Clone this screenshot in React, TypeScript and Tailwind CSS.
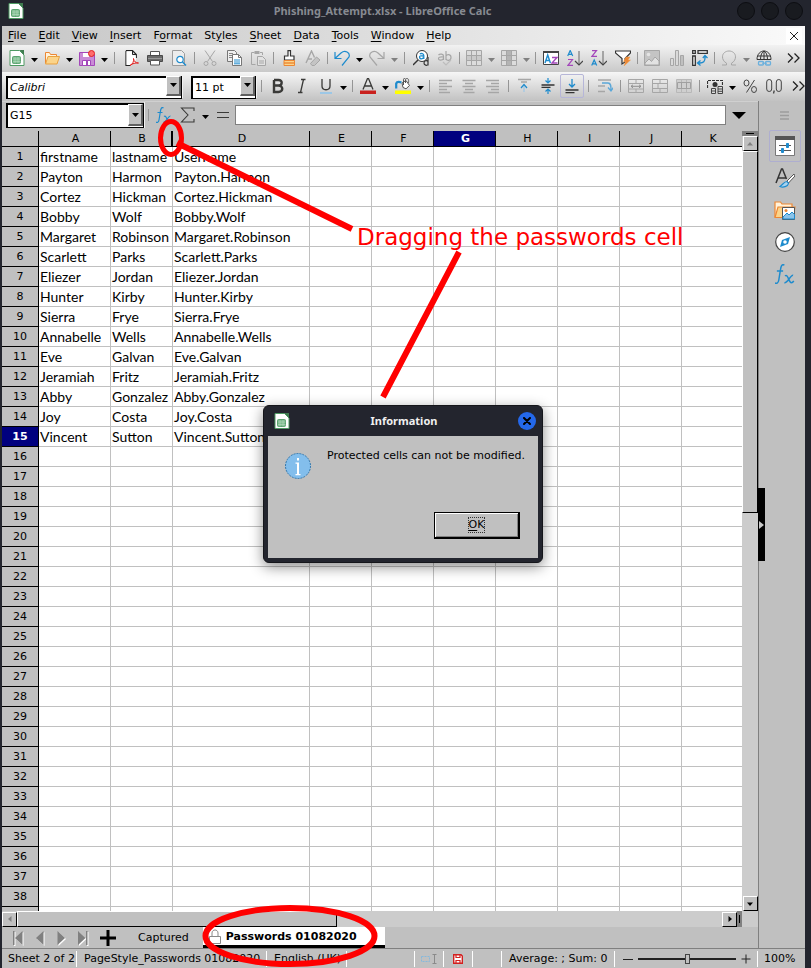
import type { ReactNode } from "react";

const ui = "font-['DejaVu_Sans','Liberation_Sans',sans-serif]";

/* ---------- icons ---------- */

function Icon({ children, size = "h-4 w-4" }: { children: ReactNode; size?: string }) {
  return (
    <svg viewBox="0 0 16 16" className={`${size} shrink-0`} fill="none" strokeWidth="1" aria-hidden="true">
      {children}
    </svg>
  );
}

const DARK = "#3a3a38";
const BLUE = "#1e8bcd";
const OFF = "#a6a6a6";
const PURPLE = "#a347ba";
const ORANGE = "#ed8733";

const CalcDoc = () => (
  <>
    <path d="M1 .5h9.5L15 5v10.500H1z" fill="#fff" stroke="#4e9a63" />
    <path d="M10.500 0H15v5z" fill="#3f7d50" />
    <rect x="3.500" y="6.500" width="8" height="7" rx="1" fill="#7dbb8e" stroke="#5aa36f" />
    <path d="M6 7v6.500M9 7v6.500M4 9h7.500M4 11.500h7.500" stroke="#b5dcc0" strokeWidth=".6" />
  </>
);

const icons: Record<string, ReactNode> = {
  new: <CalcDoc />,
  open: (
    <>
      <path d="M1.500 13V2.500h4l1 2h6V7" fill="#fff3dc" stroke={ORANGE} />
      <path d="M1.500 14l2.500-7.500h11.500L13 14z" fill="#fbd48a" stroke="#e9a13f" />
    </>
  ),
  save: (
    <>
      <path d="M.500 2.500h13l2 2v11H.500z" fill="#c98bd6" stroke={PURPLE} />
      <path d="M4 3h6v4H4z" fill="#fff" />
      <path d="M3.500 10.500h8v5h-8z" fill="#fff" stroke={PURPLE} />
      <path d="M8 11v4" stroke={PURPLE} strokeWidth="2" />
      <circle cx="12.500" cy="3.500" r="3" fill="#ff6d6d" stroke="#e02020" />
    </>
  ),
  pdf: (
    <>
      <path d="M3 .7h6.500l3.800 3.800V8M3 .7v14.600h4" fill="none" stroke="#222" strokeWidth="1.200" />
      <path d="M3.500 1.200h5.500v4h3.800v5L8 15H3.500z" fill="#fff" />
      <path d="M9.500.7v3.800h3.800" stroke="#222" />
      <path d="M7 15.500c3-1.500 4-4.500 3.500-7 .5 3 2 4.500 5 4.500-3-.3-6 .5-8.500 2.500z" stroke="#e02020" fill="#fff" />
    </>
  ),
  print: (
    <>
      <path d="M3.500 5V1.500h9V5" fill="#fff" stroke="#555" />
      <path d="M.5 5.500h15v6H.5z" fill="#6b6b6b" stroke="#4a4a4a" />
      <path d="M1 8.500h14" stroke="#999" />
      <path d="M3.500 10.500h9v4.500h-9z" fill="#fff" stroke="#555" />
    </>
  ),
  preview: (
    <>
      <path d="M1.500.5h9l3 3v12h-12z" fill="#ececec" stroke="#9c9c9c" />
      <circle cx="9" cy="9.500" r="3.200" fill="#fff" stroke={BLUE} strokeWidth="1.200" />
      <path d="M11.500 12l3.500 3.500" stroke={BLUE} strokeWidth="1.400" />
    </>
  ),
  cut: (
    <>
      <path d="M3 .5l7.500 11M13 .5l-7.500 11" stroke={OFF} />
      <circle cx="4" cy="13.500" r="2" stroke={OFF} />
      <circle cx="12" cy="13.500" r="2" stroke={OFF} />
    </>
  ),
  copy: (
    <>
      <path d="M1.500.5h7l2 2v9h-9z" fill="#efefef" stroke="#777" />
      <path d="M3 3.500h4M3 5.500h3M3 7.500h3" stroke="#888" />
      <path d="M6.500 4.500h6l3 3v8h-9z" fill="#fff" stroke="#777" />
      <path d="M8 10h6M8 12h6M8 13.800h6" stroke={BLUE} />
      <path d="M12.500 4.500v3h3" stroke="#777" />
    </>
  ),
  paste: (
    <>
      <path d="M5.500 14.500h-4v-12h3M10 2.500h2.500V5" stroke={OFF} />
      <path d="M4.500 1h5v3h-5z" fill={OFF} />
      <path d="M7.500 6.500h5l3 3v6h-8z" fill="#e2e2e2" stroke={OFF} />
      <path d="M9 11h5M9 13h5" stroke={OFF} />
    </>
  ),
  brush: (
    <>
      <path d="M7 .7h2.500V6h3.500v4H3.500V6H7z" fill="#fff" stroke="#333" strokeWidth="1.200" />
      <path d="M3 10.500h10.500v5H3z" fill="#fbd48a" stroke={ORANGE} />
      <path d="M3 13h10" stroke={ORANGE} strokeWidth="1.400" />
    </>
  ),
  clear: (
    <>
      <path d="M1 13L6.500 1l3 6.500M3 9h4" stroke={OFF} strokeWidth="1.400" />
      <path d="M5.500 13.500l6-6.500L15 10l-5.500 5.500H7z" fill="#c4c4c4" stroke={OFF} />
    </>
  ),
  undo: <path d="M1 2v6.500h6.500M1.500 8L7 3c4-3.500 9.500-.5 8 4l-7 8.500" stroke={BLUE} strokeWidth="1.200" />,
  redo: <path d="M15 2v6.500H8.500M14.500 8L9 3C5-.5-.5 2.500 1 7l7 8.500" stroke={OFF} strokeWidth="1.200" />,
  find: (
    <>
      <circle cx="9" cy="6" r="5.500" fill="#fff" stroke="#333" />
      <path d="M5 10l-5 5" stroke="#333" strokeWidth="1.500" />
      <path d="M6.800 4c1.500-1 4-.5 4 1.500V9M10.800 6c-4-.5-4.500 0-4.200 1.500.4 2 3 1.500 4.200 0" stroke={BLUE} strokeWidth="1.300" />
      <path d="M15 7v8.500M15 11.500c-1-1.500-4-1-4 1.500s3 2.800 4 1.500" stroke="#333" strokeWidth="1.200" />
    </>
  ),
  spell: (
    <>
      <path d="M1.500 5c1.500-1.500 5-1 5 1v4M6.500 7c-4-.5-5 .5-5 1.500 0 2.500 4 2 5 0M9 1v9M9 6c1-2 5-2 5 1.500s-4 3.500-5 1.500" stroke={OFF} strokeWidth="1.200" />
      <path d="M6 12l3 3 5-5" stroke="#bdbdbd" strokeWidth="1.200" />
    </>
  ),
  rows: (
    <>
      <path d="M.5.5h15v15H.5z" fill="#dcdcdc" stroke={OFF} />
      <path d="M1 6h14v4H1z" fill="#cacaca" />
      <path d="M.5 5.500h15M.5 10.500h15M5.500.5v15M10.500.5v15" stroke={OFF} />
    </>
  ),
  cols: (
    <>
      <path d="M.5.5h15v15H.5z" fill="#dcdcdc" stroke={OFF} />
      <path d="M6 1h5v14H6z" fill="#b4b4b4" />
      <path d="M.5 5.500h15M.5 10.500h15M5.500.5v15M10.500.5v15" stroke={OFF} />
    </>
  ),
  sort: (
    <>
      <path d="M.5 1.500h15v13H.5z" fill="#fff" stroke="#444" />
      <path d="M0 1h16v2H0z" fill="#444" />
      <path d="M2 13l2.700-8 2.700 8M3 10.500h3.500" stroke={BLUE} strokeWidth="1.400" />
      <path d="M9 7.500h5L9 13h5.500" stroke={PURPLE} strokeWidth="1.400" />
    </>
  ),
  asc: (
    <>
      <path d="M.7 6L3.200.5 5.700 6M1.500 4.300h3.400" stroke={BLUE} strokeWidth="1.200" />
      <path d="M1 9.500h4.500L1 15.300h5" stroke={PURPLE} strokeWidth="1.200" />
      <path d="M12 1v13" stroke="#8f8f8f" strokeWidth="1.500" />
      <path d="M8 11l4 4 4-4" stroke="#444" strokeWidth="1.200" />
    </>
  ),
  desc: (
    <>
      <path d="M1 .7h4.500L1 6.300h5" stroke={PURPLE} strokeWidth="1.200" />
      <path d="M.7 15.500L3.200 10l2.500 5.500M1.500 13.800h3.400" stroke={BLUE} strokeWidth="1.200" />
      <path d="M12 1v13" stroke="#8f8f8f" strokeWidth="1.500" />
      <path d="M8 11l4 4 4-4" stroke="#444" strokeWidth="1.200" />
    </>
  ),
  filter: (
    <>
      <path d="M.5 1h15v2L10 8.500V12l-3 2V8.500L.5 3z" fill="#fff" stroke="#333" strokeWidth="1.200" />
      <path d="M11 7h4l-2 3h2.500L9 16l1.500-4.500H8.500z" fill={ORANGE} stroke="#f0a050" strokeWidth=".5" />
    </>
  ),
  image: (
    <>
      <path d="M.5.5h15v15H.5z" fill="#c4c4c4" stroke={OFF} />
      <circle cx="4.500" cy="4.500" r="1.800" fill="#e4e4e4" />
      <path d="M1 13l4-4 2.500 2.500L11 7l4 4v4H1z" fill="#e2e2e2" stroke={OFF} />
    </>
  ),
  chart: (
    <>
      <path d="M2.500 8.500h3v7h-3z" fill="#dadada" stroke={OFF} />
      <path d="M7.500.5h3v15h-3z" fill="#dadada" stroke={OFF} />
      <path d="M12.500 5.500h3v10h-3z" fill="#c0c0c0" stroke={OFF} />
    </>
  ),
  pivot: (
    <>
      <path d="M.7.7h2.600v2.600H.7zM.7 6v9.300h2.600V6zM6 .7h9.300v2.600H6z" fill="#fff" stroke="#333" strokeWidth="1.300" />
      <path d="M13 6v2c0 3-2 5-5 5H6M10.800 8L13 5.500 15.500 8M8.500 10.500L5.500 13l3 2.500" stroke={BLUE} strokeWidth="1.300" />
    </>
  ),
  omega: <path d="M1 15h4.500v-1.800C2.500 11.500 1.500 9 1.500 6.800 1.500 3.300 4.500 1 8 1s6.500 2.300 6.500 5.800c0 2.200-1 4.700-4 6.400V15H15" stroke={OFF} />,
  link: (
    <>
      <path d="M1 9.500C1 4 4.500 1 8 1s7 3 7 8.500zM8 1v8.500M4.500 9.500C4.500 5 6 2 8 1c2 1 3.500 4 3.500 8.500M1.500 6h13" stroke="#333" />
      <rect x="2.500" y="11.500" width="5" height="3.500" rx="1" stroke="#6bb0dd" strokeWidth="1.300" />
      <rect x="9.500" y="11.500" width="5" height="3.500" rx="1" stroke="#6bb0dd" strokeWidth="1.300" />
      <path d="M6 13.200h5" stroke="#6bb0dd" />
    </>
  ),
  bold: (
    <path d="M4 2h4.500c4.500 0 4 5.500 0 5.500H4m4.500 0c5 0 5 6.500 0 6.500H4V2" stroke={DARK} strokeWidth="2.400" />
  ),
  italic: <path d="M7 1.500h4.500M4 14.500h4.500M9.500 1.500l-3 13" stroke={DARK} strokeWidth="1.300" />,
  underline: (
    <>
      <path d="M4 1v7c0 5 8 5 8 0V1" stroke={DARK} strokeWidth="1.300" />
      <path d="M2 15h12" stroke="#9cc7e6" strokeWidth="2" />
    </>
  ),
  fontcolor: (
    <>
      <path d="M3 11.500L7.500.5h1l4.500 11M4.700 8h6.600" stroke={DARK} strokeWidth="1.300" />
      <path d="M0 12.500h16V16H0z" fill="#c9211e" />
    </>
  ),
  highlight: (
    <>
      <path d="M1.200 10.500V5.500C2 3.500 4.500 3.800 6.500 4.500" stroke={BLUE} strokeWidth="2.200" />
      <path d="M7 5l4-2.500 3.500 5L11 10.800 8 9.500z" fill="#fff" stroke="#555" />
      <path d="M8.500 7V1.500c0-1.500 2-1.500 2 0V5M11 .8c2-1 3 .5 2.500 4" stroke="#555" />
      <path d="M0 12.500h16V16H0z" fill="#ffff00" />
    </>
  ),
  left: <path d="M2 2.500h13M2 5.500h8M2 8.500h13M2 11.500h8M2 14.500h11" stroke={OFF} strokeWidth="1.400" />,
  center: <path d="M1.500 2.500h13M4 5.500h8M1.500 8.500h13M4 11.500h8M2.500 14.500h11" stroke={OFF} strokeWidth="1.400" />,
  right: <path d="M1 2.500h13M6 5.500h8M1 8.500h13M6 11.500h8M3 14.500h11" stroke={OFF} strokeWidth="1.400" />,
  top: (
    <>
      <path d="M2 1.500h13M5 4h6" stroke={OFF} strokeWidth="1.500" />
      <path d="M8 14V8" stroke="#9cc7e6" strokeWidth="1.200" />
      <path d="M5 10l3-3.500L11 10" stroke={BLUE} strokeWidth="1.200" />
    </>
  ),
  middle: (
    <>
      <path d="M1.500 7h13M1.500 9.300h9" stroke="#333" strokeWidth="1.300" />
      <path d="M8 0v4.500M5.500 2.500L8 5l2.500-2.500M8 16v-4M5.500 13.500L8 11l2.500 2.500" stroke={BLUE} strokeWidth="1.200" />
    </>
  ),
  bottom: (
    <>
      <path d="M8 1v7.500M5 6l3 3 3-3" stroke={BLUE} strokeWidth="1.300" />
      <path d="M1.500 12h13M1.500 14.700h9" stroke="#333" strokeWidth="1.300" />
    </>
  ),
  wrap: (
    <>
      <path d="M1 2h13M1 8h7M1 13.500h7" stroke={OFF} strokeWidth="1.500" />
      <path d="M5 5h6c3 0 3 3 3 7M11 9.500l3 3.500 2.500-3.500" stroke="#5aa7d8" strokeWidth="1.300" />
    </>
  ),
  merge: (
    <>
      <path d="M.5 1.500h15v13H.5zM.5 5.500h15M.5 11h15M8 1.500v4M8 11v3.500" stroke={OFF} />
      <path d="M3 8.300h10M5 6.800L3 8.300l2 1.500M11 6.800l2 1.500-2 1.500" stroke="#8f8f8f" />
    </>
  ),
  split: <path d="M.5 1.500h15v13H.5zM.5 5.500h15M.5 10.500h15M8 1.500v4M6 5.500v5M8 10.500v4" stroke={OFF} />,
  center2: (
    <>
      <path d="M.5 1.500h15v13H.5z" fill="#cfcfcf" stroke="#b8b8b8" />
      <path d="M.5 10.500h15M5.500 1.500v3M10.500 1.500v3M5.500 10.500v4M10.500 10.500v4" stroke="#b8b8b8" />
      <path d="M1.500 4.500h13v6h-13zM5.500 4.500v6M10.500 4.500v6" stroke="#a0a0a0" />
    </>
  ),
  money: (
    <>
      <path d="M.5 10V2.500h15V7" stroke="#333" strokeWidth="1.200" strokeDasharray="3 1" />
      <circle cx="8" cy="6.500" r="2.500" fill="#333" />
      <path d="M4.500 10.500h4v5h-4zM11 8.500h4.500v7H11zM4.500 13h4M11 11h4.500M11 13.300h4.500" fill="#ddd" stroke="#444" />
    </>
  ),
  percent: (
    <>
      <path d="M12.500 2l-8 12.500" stroke="#444" />
      <ellipse cx="4.500" cy="5" rx="2.500" ry="3" stroke="#444" />
      <ellipse cx="12" cy="11.500" rx="2.500" ry="3" stroke="#444" />
    </>
  ),
  decimal: (
    <>
      <rect x=".7" y="1.500" width="5" height="12" rx="2.500" stroke="#444" />
      <rect x="10.300" y="1.500" width="5" height="12" rx="2.500" stroke="#444" />
      <path d="M8.300 12.500L7.500 15.500" stroke="#444" strokeWidth="1.300" />
    </>
  ),
  more: <path d="M3 3.500l4.500 4.500L3 12.500M9.500 3.500L14 8l-4.500 4.500" stroke="#222" strokeWidth="1.300" />,
  fx: (
    <path d="M7.500 1C5.500-.5 4.700 2 4.300 5L3 13c-.4 2.500-2 3-3 2M1.500 5.500h5M8 9.500c2.500-2 3 5.500 5 5.500 1 0 1.500-.5 2-1.500M14.500 9c-2-.5-4.500 6.500-7 6" stroke={BLUE} strokeWidth="1.200" />
  ),
  sigma: <path d="M14 4V1H1.500L8 8l-6.500 7H14v-3" stroke={DARK} strokeWidth="1.100" />,
  equals: <path d="M2 5.500h12M2 10.500h12" stroke={DARK} strokeWidth="1" />,
};

/* ---------- toolbar parts ---------- */

function Tool({ name, label, active = false }: { name: string; label: string; active?: boolean }) {
  return (
    <button
      type="button"
      aria-label={label}
      className={`flex h-6 w-6 shrink-0 items-center justify-center rounded-xs border ${active ? "border-[#b6b6d8]" : "border-transparent"}`}
    >
      <Icon>{icons[name]}</Icon>
    </button>
  );
}

function Drop({ label, off = false }: { label: string; off?: boolean }) {
  return (
    <button type="button" aria-label={label} className="flex h-6 w-[11px] shrink-0 items-center justify-center pt-1">
      <svg viewBox="0 0 7 4" className={`h-1 w-[7px] ${off ? "fill-[#808080]" : "fill-black"}`} aria-hidden="true">
        <path d="M0 0h7L3.500 4z" />
      </svg>
    </button>
  );
}

function Sep({ size = "w-[7px]" }: { size?: string }) {
  return (
    <span className={`flex ${size} shrink-0 justify-center`}>
      <span className="h-3 w-px bg-[#959595]" />
    </span>
  );
}

function Combo({ label, value, width, height, italic = false }: { label: string; value: string; width: string; height: string; italic?: boolean }) {
  return (
    <div className={`relative ${width} ${height} shrink-0 border-r border-b border-[#f2f2f2]`}>
      <select
        aria-label={label}
        defaultValue={value}
        className={`h-full w-full appearance-none border border-t-2 border-l-2 border-black bg-white pl-[2px] text-[11px] leading-4 text-black outline-none ${italic ? "italic" : ""}`}
      >
        <option>{value}</option>
      </select>
      <span className="pointer-events-none absolute top-[2px] right-px bottom-px flex w-[15px] items-center justify-center border-t border-l border-r-2 border-b-2 border-t-white border-l-white border-r-[#606060] border-b-[#606060] bg-[#c0c0c0]">
        <svg viewBox="0 0 7 4" className="h-1 w-[7px]" aria-hidden="true">
          <path d="M0 0h7L3.500 4z" />
        </svg>
      </span>
    </div>
  );
}

function Accel({ text, at = 0 }: { text: string; at?: number }) {
  return (
    <>
      {text.slice(0, at)}
      <span className="underline underline-offset-2">{text[at]}</span>
      {text.slice(at + 1)}
    </>
  );
}

/* ---------- data ---------- */

const menus: [string, number][] = [
  ["File", 0],
  ["Edit", 0],
  ["View", 0],
  ["Insert", 0],
  ["Format", 1],
  ["Styles", 2],
  ["Sheet", 0],
  ["Data", 0],
  ["Tools", 0],
  ["Window", 0],
  ["Help", 0],
];

const people = [
  ["firstname", "lastname", "Username"],
  ["Payton", "Harmon", "Payton.Harmon"],
  ["Cortez", "Hickman", "Cortez.Hickman"],
  ["Bobby", "Wolf", "Bobby.Wolf"],
  ["Margaret", "Robinson", "Margaret.Robinson"],
  ["Scarlett", "Parks", "Scarlett.Parks"],
  ["Eliezer", "Jordan", "Eliezer.Jordan"],
  ["Hunter", "Kirby", "Hunter.Kirby"],
  ["Sierra", "Frye", "Sierra.Frye"],
  ["Annabelle", "Wells", "Annabelle.Wells"],
  ["Eve", "Galvan", "Eve.Galvan"],
  ["Jeramiah", "Fritz", "Jeramiah.Fritz"],
  ["Abby", "Gonzalez", "Abby.Gonzalez"],
  ["Joy", "Costa", "Joy.Costa"],
  ["Vincent", "Sutton", "Vincent.Sutton"],
];

const columns = ["A", "B", "D", "E", "F", "G", "H", "I", "J", "K"];
const ROWS = 38;

/* ---------- page parts ---------- */

function TitleBar() {
  return (
    <header className="flex h-[26px] items-center px-2 pb-1">
      <span className="flex w-5">
        <Icon>
          <CalcDoc />
        </Icon>
      </span>
      <h1 className="flex-1 text-center font-['Noto_Sans',sans-serif] text-[11px] leading-5 font-bold text-[#878a91]">
        Phishing_Attempt.xlsx - LibreOffice Calc
      </h1>
      <div className="flex gap-[6px]">
        {["Minimise", "Maximise", "Close"].map((n) => (
          <button key={n} type="button" aria-label={n} className="h-[18px] w-[18px] rounded-full border border-[#0d0e12] bg-[#191b20]" />
        ))}
      </div>
    </header>
  );
}

function MenuBar() {
  return (
    <nav className="flex h-[19px] items-center bg-linear-to-r from-[#c6c6c6] to-[#fafafa] pr-[3px] pl-[6px]">
      <div className="flex flex-1 gap-3">
        {menus.map(([m, at]) => (
          <button key={m} type="button" className="text-[11px] leading-4 text-black">
            <Accel text={m} at={at} />
          </button>
        ))}
      </div>
      <button type="button" aria-label="Close document" className="flex h-4 w-4 items-center justify-center bg-white">
        <svg viewBox="0 0 8 8" className="h-2 w-2" stroke="#222" aria-hidden="true">
          <path d="M0 0l8 8M8 0L0 8" />
        </svg>
      </button>
    </nav>
  );
}

function StandardBar() {
  return (
    <div className="flex h-[27px] items-center overflow-hidden bg-linear-to-b from-[#f2f2f2] to-[#c9c9c9] pb-px pl-[3px]">
      <Tool name="new" label="New" />
      <Drop label="New options" />
      <Tool name="open" label="Open" />
      <Drop label="Open options" />
      <Tool name="save" label="Save" />
      <Drop label="Save options" />
      <Sep size="w-[9px]" />
      <Tool name="pdf" label="Export as PDF" />
      <Tool name="print" label="Print" />
      <Tool name="preview" label="Print preview" />
      <Sep />
      <Tool name="cut" label="Cut" />
      <Tool name="copy" label="Copy" />
      <Tool name="paste" label="Paste" />
      <Sep />
      <Tool name="brush" label="Clone formatting" />
      <Tool name="clear" label="Clear formatting" />
      <Sep size="w-[5px]" />
      <Tool name="undo" label="Undo" />
      <Drop label="Undo history" />
      <Tool name="redo" label="Redo" />
      <Drop label="Redo history" off />
      <Sep size="w-[9px]" />
      <Tool name="find" label="Find and replace" />
      <Tool name="spell" label="Spelling" />
      <Sep size="w-[5px]" />
      <Tool name="rows" label="Row" />
      <Drop label="Row options" off />
      <Tool name="cols" label="Column" />
      <Drop label="Column options" off />
      <Sep />
      <Tool name="sort" label="Sort" />
      <Tool name="asc" label="Sort ascending" />
      <Tool name="desc" label="Sort descending" />
      <Tool name="filter" label="AutoFilter" />
      <Sep size="w-[5px]" />
      <Tool name="image" label="Insert image" />
      <Tool name="chart" label="Insert chart" />
      <Tool name="pivot" label="Pivot table" />
      <Sep size="w-[5px]" />
      <Tool name="omega" label="Special character" />
      <Drop label="More characters" off />
      <Tool name="link" label="Hyperlink" />
      <span className="ml-auto">
        <Tool name="more" label="More tools" />
      </span>
    </div>
  );
}

function FormatBar() {
  return (
    <div className="flex h-[29px] items-center overflow-hidden bg-linear-to-b from-[#f6f6f6] to-[#c2c2c2] pb-[2px] pl-1">
      <Combo label="Font name" value="Calibri" width="w-[177px]" height="h-6" italic />
      <span className="w-2 shrink-0" />
      <Combo label="Font size" value="11 pt" width="w-[66px]" height="h-6" />
      <Sep size="w-[9px]" />
      <Tool name="bold" label="Bold" />
      <Tool name="italic" label="Italic" />
      <Tool name="underline" label="Underline" />
      <Drop label="Underline style" />
      <Sep />
      <Tool name="fontcolor" label="Font colour" />
      <Drop label="Font colour options" />
      <Tool name="highlight" label="Highlight colour" />
      <Drop label="Highlight options" />
      <Sep />
      <Tool name="left" label="Align left" />
      <Tool name="center" label="Align centre" />
      <Tool name="right" label="Align right" />
      <Sep />
      <Tool name="top" label="Align top" />
      <Tool name="middle" label="Centre vertically" />
      <Tool name="bottom" label="Align bottom" active />
      <Sep size="w-[9px]" />
      <Tool name="wrap" label="Wrap text" />
      <Sep />
      <Tool name="merge" label="Merge and centre" />
      <Tool name="split" label="Split cells" />
      <Tool name="center2" label="Merge cells" />
      <Sep />
      <Tool name="money" label="Currency" />
      <Drop label="Currency options" />
      <Tool name="percent" label="Percent" />
      <Tool name="decimal" label="Number" />
      <span className="ml-auto">
        <Tool name="more" label="More formatting" />
      </span>
    </div>
  );
}

function FormulaBar() {
  return (
    <div className="flex h-[30px] items-center border-t border-[#d0d0d0] bg-[#c0c0c0] pb-[3px] pl-1">
      <Combo label="Name box" value="G15" width="w-[139px]" height="h-[26px]" />
      <Sep />
      <Tool name="fx" label="Function wizard" />
      <Tool name="sigma" label="Select function" />
      <Drop label="Function options" />
      <Tool name="equals" label="Formula" />
      <input
        aria-label="Formula input"
        className="h-5 min-w-0 flex-1 border border-[#808080] bg-white text-[11px] outline-none"
      />
      <button type="button" aria-label="Expand formula bar" className="flex w-8 shrink-0 items-center justify-start pl-[6px]">
        <svg viewBox="0 0 14 7" className="h-[7px] w-[14px]" aria-hidden="true">
          <path d="M0 0h14L7 7z" />
        </svg>
      </button>
    </div>
  );
}

function Sheet() {
  return (
    <table className="w-full flex-1 table-fixed border-separate border-spacing-0 bg-white">
      <colgroup>
        <col className="w-[37px]" />
        <col className="w-[72px]" />
        <col className="w-[62px]" />
        <col className="w-[137px]" />
        {columns.slice(3, 9).map((c) => (
          <col key={c} className="w-[62px]" />
        ))}
        <col />
      </colgroup>
      <thead>
        <tr className="h-4 text-[11px] leading-[15px] text-black">
          <th className="border-r border-b border-black bg-[#c0c0c0] p-0" />
          {columns.map((c) => (
            <th
              key={c}
              scope="col"
              className={`border-b border-black p-0 pl-[2px] text-center ${
                c === "G" ? "bg-[#00007f] font-bold text-white" : "bg-[#c0c0c0] font-normal"
              } ${c === "K" ? "" : c === "B" ? "border-r-2" : "border-r"}`}
            >
              {c}
            </th>
          ))}
        </tr>
      </thead>
      <tbody>
        {Array.from({ length: ROWS }, (_, i) => (
          <tr key={i} className="h-5">
            <th
              scope="row"
              className={`border-r border-b border-black p-0 text-center text-[11px] leading-[19px] ${
                i === 14 ? "bg-[#00007f] font-bold text-white" : "bg-[#c0c0c0] font-normal text-black"
              }`}
            >
              {i + 1}
            </th>
            {columns.map((c, j) => (
              <td
                key={c}
                className={`overflow-visible border-b border-[#c0c0c0] p-0 pt-px pl-px font-['Lato','Carlito',sans-serif] text-[14px] leading-[18px] whitespace-nowrap text-black ${c === "K" ? "" : "border-r"}`}
              >
                {people[i]?.[j]}
              </td>
            ))}
          </tr>
        ))}
        <tr className="h-1">
          <th className="border-r border-black bg-[#c0c0c0] p-0" />
          {columns.map((c) => (
            <td key={c} className={`border-[#c0c0c0] p-0 ${c === "K" ? "" : "border-r"}`} />
          ))}
        </tr>
      </tbody>
    </table>
  );
}

const raised = "border border-t-white border-l-white border-r-black border-b-black bg-[#c0c0c0]";

function ScrollButton({ label, path, off = false }: { label: string; path: string; off?: boolean }) {
  return (
    <button type="button" aria-label={label} className={`flex h-[15px] w-[15px] shrink-0 items-center justify-center ${raised}`}>
      <svg viewBox="0 0 6 6" className={`h-[6px] w-[6px] ${off ? "fill-[#808080]" : "fill-black"}`} aria-hidden="true">
        <path d={path} />
      </svg>
    </button>
  );
}

function VerticalScroll() {
  return (
    <div className="flex w-4 shrink-0 flex-col items-center bg-[#cccccc]">
      <span className="flex h-[5px] w-full items-center justify-center bg-[#808080]">
        <span className="h-px w-2 bg-black" />
      </span>
      <ScrollButton label="Scroll up" path="M3 1l3 3.500H0z" off />
      <span className={`h-[362px] w-full ${raised}`} />
      <span className="flex-1" />
      <ScrollButton label="Scroll down" path="M0 1.500h6L3 5z" />
    </div>
  );
}

function HorizontalScroll() {
  return (
    <div className="flex h-4 items-center bg-[#cccccc] pr-4">
      <ScrollButton label="Scroll left" path="M4.500 0v6L1 3z" off />
      <span className={`h-full w-[320px] ${raised}`} />
      <span className="flex-1" />
      <ScrollButton label="Scroll right" path="M1.500 0v6L5 3z" />
      <span className="flex h-full w-[5px] items-center justify-center bg-[#808080]">
        <span className="h-2 w-px bg-black" />
      </span>
    </div>
  );
}

const navShapes = [
  ["First sheet", "M1 0v14h1.500V0zM10.500 0v14L3 7z"],
  ["Previous sheet", "M10.500 0v14L3 7z"],
  ["Next sheet", "M3.500 0v14L11 7z"],
  ["Last sheet", "M3 0v14l7.500-7zM11 0v14h1.500V0z"],
];

function SheetTabs() {
  return (
    <div className="flex h-[21px] items-stretch bg-[#c0c0c0] pl-[10px]">
      <div className="flex items-center gap-[7px]">
        {navShapes.map(([label, d]) => (
          <button key={label} type="button" aria-label={label} className="drop-shadow-[1px_1px_0_#ffffff]">
            <svg viewBox="0 0 14 14" className="h-[14px] w-[14px] fill-[#808080]" aria-hidden="true">
              <path d={d} />
            </svg>
          </button>
        ))}
      </div>
      <button type="button" aria-label="Add sheet" className="ml-[11px] flex items-center">
        <svg viewBox="0 0 16 16" className="h-4 w-4" stroke="#000" strokeWidth="3" aria-hidden="true">
          <path d="M8 0v16M0 8h16" />
        </svg>
      </button>
      <button type="button" className="ml-[22px] text-[11px] leading-4 text-black">
        Captured
      </button>
      <button type="button" className="ml-[14px] flex w-[182px] items-center gap-1 border-b-3 border-black bg-white pt-px pl-[5px] text-[11px] leading-4 font-bold whitespace-nowrap text-black">
        <svg viewBox="0 0 14 16" className="h-4 w-[14px]" fill="#fff" stroke="#8a8a8a" aria-hidden="true">
          <path d="M4 8V4c0-4 6-4 6 0v4" fill="none" />
          <path d="M1.500 7.500h11v7h-11z" />
        </svg>
        Passwords 01082020
      </button>
    </div>
  );
}

function SideBar() {
  const item = "flex h-8 w-8 items-center justify-center";
  return (
    <aside className="relative flex w-[47px] shrink-0 flex-col items-center border-l border-[#808080] bg-[#c0c0c0] pt-[3px] pl-[5px]">
      <button type="button" aria-label="Sidebar settings" className="flex h-[26px] items-center pb-1">
        <svg viewBox="0 0 9 9" className="h-[9px] w-[9px]" stroke="#9c9c9c" strokeWidth="1.500" aria-hidden="true">
          <path d="M0 1h9M0 4.500h9M0 8h9" />
        </svg>
      </button>
      <button type="button" aria-label="Properties" className={`${item} rounded-xs border border-[#aeaed0]`}>
        <svg viewBox="0 0 20 20" className="h-5 w-5 shrink-0" fill="none" aria-hidden="true">
          <path d="M.5.5h19v19H.5z" fill="#fff" stroke="#777" />
          <path d="M0 0h20v4H0z" fill="#555" />
          <path d="M4 9.500h12M4 14.500h12" stroke="#555" />
          <path d="M11.500 7.500h2v4h-2zM6.500 12.500h2v4h-2z" fill={BLUE} stroke={BLUE} />
        </svg>
      </button>
      <button type="button" aria-label="Styles" className={item}>
        <svg viewBox="0 0 20 20" className="h-5 w-5" fill="none" aria-hidden="true">
          <path d="M1 15L6.500 1h1l4 10M3 10h8" stroke="#333" strokeWidth="1.500" />
          <path d="M19 6l-7 7 1.500 2L20 8z" fill="#fff" stroke="#555" />
          <path d="M12 13.500c-3 0-4 3-7 5 3 1.500 8 0 8.500-3z" fill="#a9d3ef" stroke={BLUE} strokeWidth="1.200" />
        </svg>
      </button>
      <button type="button" aria-label="Gallery" className={item}>
        <svg viewBox="0 0 22 20" className="h-5 w-[22px]" fill="none" aria-hidden="true">
          <path d="M1 17V2h5.500L8 4h10v3" fill="#fff3dc" stroke={ORANGE} strokeWidth="1.200" />
          <path d="M1 17.500L4 7h17l-2 10.500z" fill="#fbd48a" stroke={ORANGE} strokeWidth="1.200" />
          <path d="M8.500 7.500h12v12h-12z" fill="#fff" stroke="#555" />
          <path d="M9 17l4-4 2 2 3-3 2.500 2.500V19H9z" fill="#8cc4ea" stroke={BLUE} />
          <circle cx="12" cy="10.500" r="1.500" fill={ORANGE} />
        </svg>
      </button>
      <button type="button" aria-label="Navigator" className={item}>
        <svg viewBox="0 0 20 20" className="h-5 w-5" aria-hidden="true">
          <circle cx="10" cy="10" r="9.300" fill="#fff" stroke="#444" strokeWidth="1.200" />
          <path d="M15 5l-2 7-8 3 2-7z" fill={BLUE} />
          <circle cx="10" cy="10" r="1.800" fill="#fff" />
        </svg>
      </button>
      <button type="button" aria-label="Functions" className={item}>
        <Icon size="h-5 w-5">{icons.fx}</Icon>
      </button>
      <button
        type="button"
        aria-label="Hide sidebar"
        className="absolute top-[387px] -left-px flex h-[73px] w-[7px] items-center justify-center bg-black"
      >
        <svg viewBox="0 0 5 8" className="h-2 w-[5px] fill-[#c8c8c8]" aria-hidden="true">
          <path d="M0 0v8l5-4z" />
        </svg>
      </button>
    </aside>
  );
}

function Cell({ children, width }: { children?: ReactNode; width: string }) {
  return (
    <span className={`flex h-4 shrink-0 items-center border-r border-white whitespace-nowrap ${width}`}>{children}</span>
  );
}

function StatusBar() {
  return (
    <footer className="flex h-5 items-center border-t border-[#808080] bg-[#c0c0c0] pt-px pl-[6px] text-[11px] leading-4 text-black">
      <Cell width="w-[69px]">Sheet 2 of 2</Cell>
      <Cell width="w-[190px] pl-[7px]">PageStyle_Passwords 01082020</Cell>
      <Cell width="w-[80px] pl-[7px]">English (UK)</Cell>
      <Cell width="flex-1" />
      <Cell width="w-[29px] justify-center">
        <svg viewBox="0 0 16 10" className="h-[10px] w-4" fill="none" aria-hidden="true">
          <path d="M.5 2.500h8v5h-8z" stroke="#86b9dc" strokeDasharray="2 1" />
          <path d="M11.500.5h4M11.500 9.500h4M13.500.5v9" stroke="#8a8a8a" />
        </svg>
      </Cell>
      <Cell width="w-[29px] justify-center">
        <svg viewBox="0 0 10 10" className="h-[10px] w-[10px]" aria-hidden="true">
          <path d="M.7.7h7.300l1.300 1.300v7.300H.7z" fill="#fff" stroke="#d3201f" strokeWidth="1.400" />
          <path d="M3 1v2.500h4V1M3 9V6.500h4V9" fill="none" stroke="#d3201f" strokeWidth="1.200" />
        </svg>
      </Cell>
      <Cell width="w-[29px]" />
      <Cell width="w-[113px] pl-[7px]">Average: ; Sum: 0</Cell>
      <Cell width="w-[143px] gap-[5px] pl-2">
        <button type="button" aria-label="Zoom out" className="flex w-[10px]">
          <span className="h-px w-[10px] bg-[#222]" />
        </button>
        <input
          type="range"
          aria-label="Zoom"
          defaultValue={50}
          className="h-3 w-[98px] appearance-none bg-transparent bg-[linear-gradient(#222,#222)] bg-[length:100%_2px] bg-center bg-no-repeat [&::-webkit-slider-thumb]:h-[10px] [&::-webkit-slider-thumb]:w-[5px] [&::-webkit-slider-thumb]:appearance-none [&::-webkit-slider-thumb]:border [&::-webkit-slider-thumb]:border-[#444] [&::-webkit-slider-thumb]:bg-[#c0c0c0]"
        />
        <button type="button" aria-label="Zoom in" className="flex">
          <svg viewBox="0 0 10 10" className="h-[10px] w-[10px]" stroke="#222" aria-hidden="true">
            <path d="M5 .5v9M.5 5h9" />
          </svg>
        </button>
      </Cell>
      <span className="w-[47px] pl-[6px]">100%</span>
    </footer>
  );
}

function Dialog() {
  return (
    <section
      role="dialog"
      aria-labelledby="dialog-title"
      className="absolute top-[405px] left-[263px] w-[280px] rounded-md border border-[#15161b] bg-[#23252e] px-1 pb-1 shadow-[0_4px_14px_rgba(0,0,0,0.45)]"
    >
      <div className="flex h-[30px] items-center justify-between pr-[2px] pl-[6px]">
        <Icon>
          <CalcDoc />
        </Icon>
        <h2 id="dialog-title" className="font-['Noto_Sans',sans-serif] text-[11px] leading-5 font-bold text-[#f0f0f0]">
          Information
        </h2>
        <button type="button" aria-label="Close" className="flex h-[18px] w-[18px] items-center justify-center rounded-full bg-[#2468ea]">
          <svg viewBox="0 0 8 8" className="h-2 w-2" stroke="#000" strokeWidth="2" strokeLinecap="round" aria-hidden="true">
            <path d="M1 1l6 6M7 1L1 7" />
          </svg>
        </button>
      </div>
      <div className="flex flex-col bg-[#c0c0c0] pt-3 pr-[18px] pb-[19px] pl-[17px] text-[11px] leading-4 text-black">
        <div className="flex h-16 gap-4">
          <svg viewBox="0 0 26 26" className="mt-[5px] h-[26px] w-[26px] shrink-0" aria-hidden="true">
            <circle cx="13" cy="13" r="12.500" fill="#83beec" stroke="#3277ad" strokeDasharray="2 1" />
            <path d="M12 5h2v2.500h-2zM10.500 9.500H14V21h1.500v1.200h-5V21H12V10.700h-1.500z" fill="#fff" />
          </svg>
          <p className="whitespace-nowrap">Protected cells can not be modified.</p>
        </div>
        <button type="button" className="flex h-[27px] w-[86px] items-center justify-center self-end border-r-2 border-b-2 border-t border-l border-black bg-[#c0c0c0] shadow-[inset_1px_1px_0_#ffffff,inset_-1px_-1px_0_#808080]">
          <span className="border border-dotted border-[#333] leading-[14px]">
            <Accel text="OK" />
          </span>
        </button>
      </div>
    </section>
  );
}

function Annotations() {
  return (
    <div className="pointer-events-none absolute top-0 left-0 h-[968px] w-[811px]">
      <svg viewBox="0 0 811 968" className="absolute inset-0 h-full w-full" fill="none" stroke="#ff0000" aria-hidden="true">
        <ellipse cx="171" cy="138" rx="10.500" ry="16.500" strokeWidth="5" />
        <path d="M177 143L352 229M459 252L383 397" strokeWidth="6" />
        <ellipse cx="290" cy="936" rx="84.500" ry="28" strokeWidth="6" />
      </svg>
      <p className="absolute top-[221px] left-[357px] text-[23px] leading-8 whitespace-nowrap text-[#ff0000]">
        Dragging the passwords cell
      </p>
    </div>
  );
}

export default function App() {
  return (
    <div className={`relative flex min-h-screen flex-col overflow-hidden bg-[#23252e] ${ui}`}>
      <TitleBar />
      <main className="mr-[6px] ml-[2px] flex flex-1 flex-col bg-[#c0c0c0]">
        <MenuBar />
        <StandardBar />
        <FormatBar />
        <div className="flex flex-1">
          <div className="flex min-w-0 flex-1 flex-col">
            <FormulaBar />
            <div className="flex">
              <Sheet />
              <VerticalScroll />
            </div>
            <HorizontalScroll />
            <SheetTabs />
          </div>
          <SideBar />
        </div>
        <StatusBar />
      </main>
      <Annotations />
      <Dialog />
    </div>
  );
}
